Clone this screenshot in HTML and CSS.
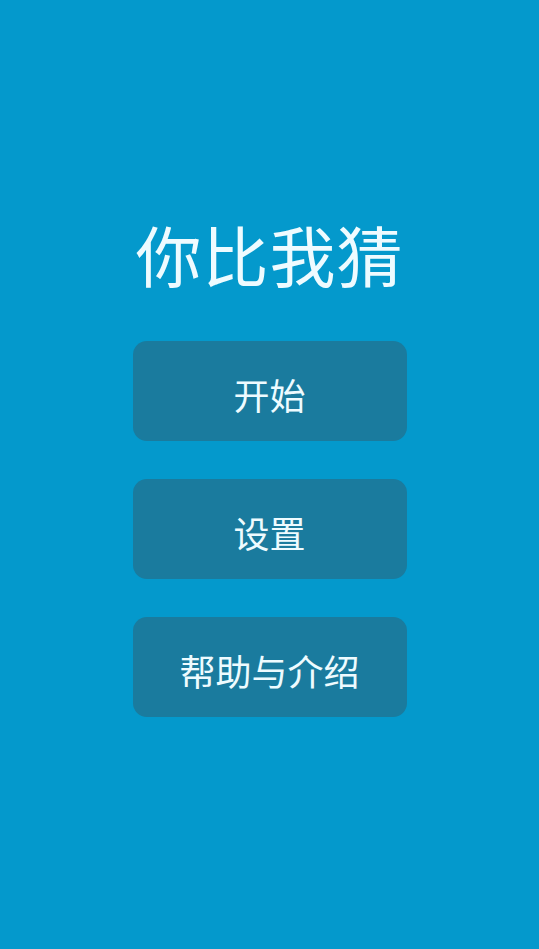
FILE: index.html
```html
<!DOCTYPE html>
<html lang="zh-CN">
<head>
    <meta charset="UTF-8">
    <meta name="viewport" content="width=device-width, initial-scale=1.0">
    <title>你比我猜</title>
    <link rel="stylesheet" href="styles.css">
</head>
<body>
    <section class="menu">
        <h1 class="title">你比我猜</h1>
        <div class="buttons">
            <button class="btn">开始</button>
            <button class="btn">设置</button>
            <button class="btn">帮助与介绍</button>
        </div>
    </section>
</body>
</html>
```

FILE: styles.css
```css
* {
    margin: 0;
    padding: 0;
    box-sizing: border-box;
    font-family: "Noto Sans CJK SC", "Noto Sans", sans-serif;
}
html, body {
    height: 100%;
}
body {
    background-color: #0499cc;
}
.menu {
    display: flex;
    flex-direction: column;
    align-items: center;
    padding-top: 213px;
}
.title {
    font-size: 66px;
    line-height: 80px;
    font-weight: normal;
    color: #eefbff;
    letter-spacing: 1px;
}
.buttons {
    display: flex;
    flex-direction: column;
    gap: 38px;
    margin-top: 48px;
}
.btn {
    width: 274px;
    height: 100px;
    padding-top: 5px;
    background: #1a7b9e;
    color: #eefbff;
    font-size: 36px;
    border: none;
    border-radius: 14px;
    cursor: pointer;
}
.btn:hover {
    opacity: 0.9;
}
```
